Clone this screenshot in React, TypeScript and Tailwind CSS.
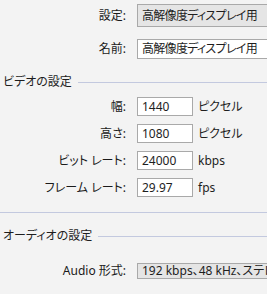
const font = "[font-family:'Noto_Sans','Noto_Sans_CJK_JP',sans-serif] [font-feature-settings:'palt']"

function Label({ children }: { children: React.ReactNode }) {
  return (
    <div className="w-[126px] shrink-0 text-right text-[12px] leading-none text-[#1a1a1a]">
      {children}
    </div>
  )
}

function Field({
  label,
  value,
  unit,
  className,
}: {
  label: string
  value: string
  unit?: string
  className: string
}) {
  return (
    <div className="flex items-center">
      <Label>{label}</Label>
      <div
        className={`ml-[11px] flex shrink-0 items-center border border-[#a9a9a9] pl-[4px] text-[12px] leading-none whitespace-nowrap text-[#1e1e1e] ${className}`}
      >
        {value}
      </div>
      {unit && <span className="ml-[5px] text-[12px] leading-none text-[#1e1e1e]">{unit}</span>}
    </div>
  )
}

function SectionHeader({ title, className }: { title: string; className: string }) {
  return (
    <div className={`flex h-[16px] items-center pl-[3px] ${className}`}>
      <span className="text-[12px] leading-none text-[#1e1e1e]">{title}</span>
      <div className="ml-[6px] h-px flex-1 bg-[#c3c9df]" />
    </div>
  )
}

export default function App() {
  return (
    <div className={`flex h-[294px] w-[267px] flex-col overflow-hidden bg-[#f3f3f3] pt-[4px] ${font}`}>
      <Field
        label="設定:"
        value="高解像度ディスプレイ用"
        className="h-[23px] w-[160px] bg-[#e5e5e5] tracking-[-0.7px]"
      />
      <div className="mt-[12px]">
        <Field
          label="名前:"
          value="高解像度ディスプレイ用"
          className="h-[20px] w-[160px] bg-white tracking-[-0.7px]"
        />
      </div>

      <SectionHeader title="ビデオの設定" className="mt-[15px]" />

      <div className="mt-[7px] flex flex-col gap-[8px]">
        <Field label="幅:" value="1440" unit="ピクセル" className="h-[19px] w-[56px] bg-white" />
        <Field label="高さ:" value="1080" unit="ピクセル" className="h-[19px] w-[56px] bg-white" />
        <Field label="ビット レート:" value="24000" unit="kbps" className="h-[19px] w-[56px] bg-white" />
        <Field label="フレーム レート:" value="29.97" unit="fps" className="h-[19px] w-[56px] bg-white" />
      </div>

      <div className="mt-[15px] h-px w-full bg-[#c3c9df]" />

      <SectionHeader title="オーディオの設定" className="mt-[15px]" />

      <div className="mt-[19px]">
        <Field
          label="Audio 形式:"
          value="192 kbps、48 kHz、ステレオ"
          className="h-[16px] w-[160px] bg-[#e5e5e5]"
        />
      </div>
    </div>
  )
}
